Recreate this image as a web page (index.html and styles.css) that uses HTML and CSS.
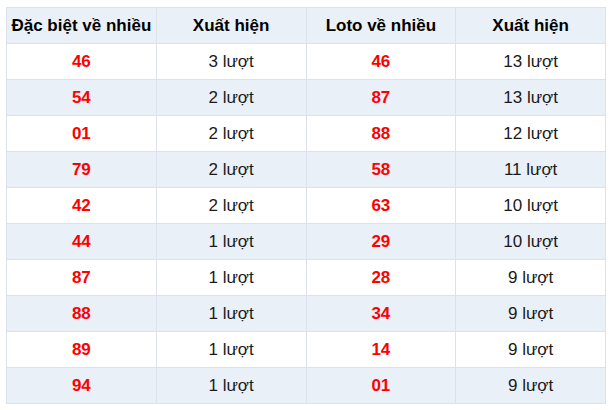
FILE: index.html
```html
<!DOCTYPE html>
<html lang="vi">
<head>
<meta charset="utf-8">
<link rel="stylesheet" href="styles.css">
</head>
<body>
<table class="stats">
  <thead>
    <tr><th>Đặc biệt về nhiều</th><th>Xuất hiện</th><th>Loto về nhiều</th><th>Xuất hiện</th></tr>
  </thead>
  <tbody>
    <tr><td class="num">46</td><td>3 lượt</td><td class="num">46</td><td>13 lượt</td></tr>
    <tr><td class="num">54</td><td>2 lượt</td><td class="num">87</td><td>13 lượt</td></tr>
    <tr><td class="num">01</td><td>2 lượt</td><td class="num">88</td><td>12 lượt</td></tr>
    <tr><td class="num">79</td><td>2 lượt</td><td class="num">58</td><td>11 lượt</td></tr>
    <tr><td class="num">42</td><td>2 lượt</td><td class="num">63</td><td>10 lượt</td></tr>
    <tr><td class="num">44</td><td>1 lượt</td><td class="num">29</td><td>10 lượt</td></tr>
    <tr><td class="num">87</td><td>1 lượt</td><td class="num">28</td><td>9 lượt</td></tr>
    <tr><td class="num">88</td><td>1 lượt</td><td class="num">34</td><td>9 lượt</td></tr>
    <tr><td class="num">89</td><td>1 lượt</td><td class="num">14</td><td>9 lượt</td></tr>
    <tr><td class="num">94</td><td>1 lượt</td><td class="num">01</td><td>9 lượt</td></tr>
  </tbody>
</table>
</body>
</html>
```
FILE: styles.css
```css
html, body {
  margin: 0;
  background: #ffffff;
}
body {
  padding: 7px 6px;
  font-family: "Liberation Sans", Arial, sans-serif;
  font-size: 17px;
  color: #1a1a1a;
}
.stats {
  border-collapse: collapse;
  width: 600px;
  table-layout: fixed;
}
.stats th, .stats td {
  border: 1px solid #dde2ea;
  height: 35px;
  padding: 0;
  text-align: center;
  vertical-align: middle;
}
.stats th {
  background: #eaf0f8;
  font-weight: bold;
  color: #000;
}
.stats tbody tr:nth-child(even) td {
  background: #eaf0f8;
}
.stats td {
  background: #ffffff;
}
.stats td.num {
  color: #ff0000;
  font-weight: bold;
}
```
